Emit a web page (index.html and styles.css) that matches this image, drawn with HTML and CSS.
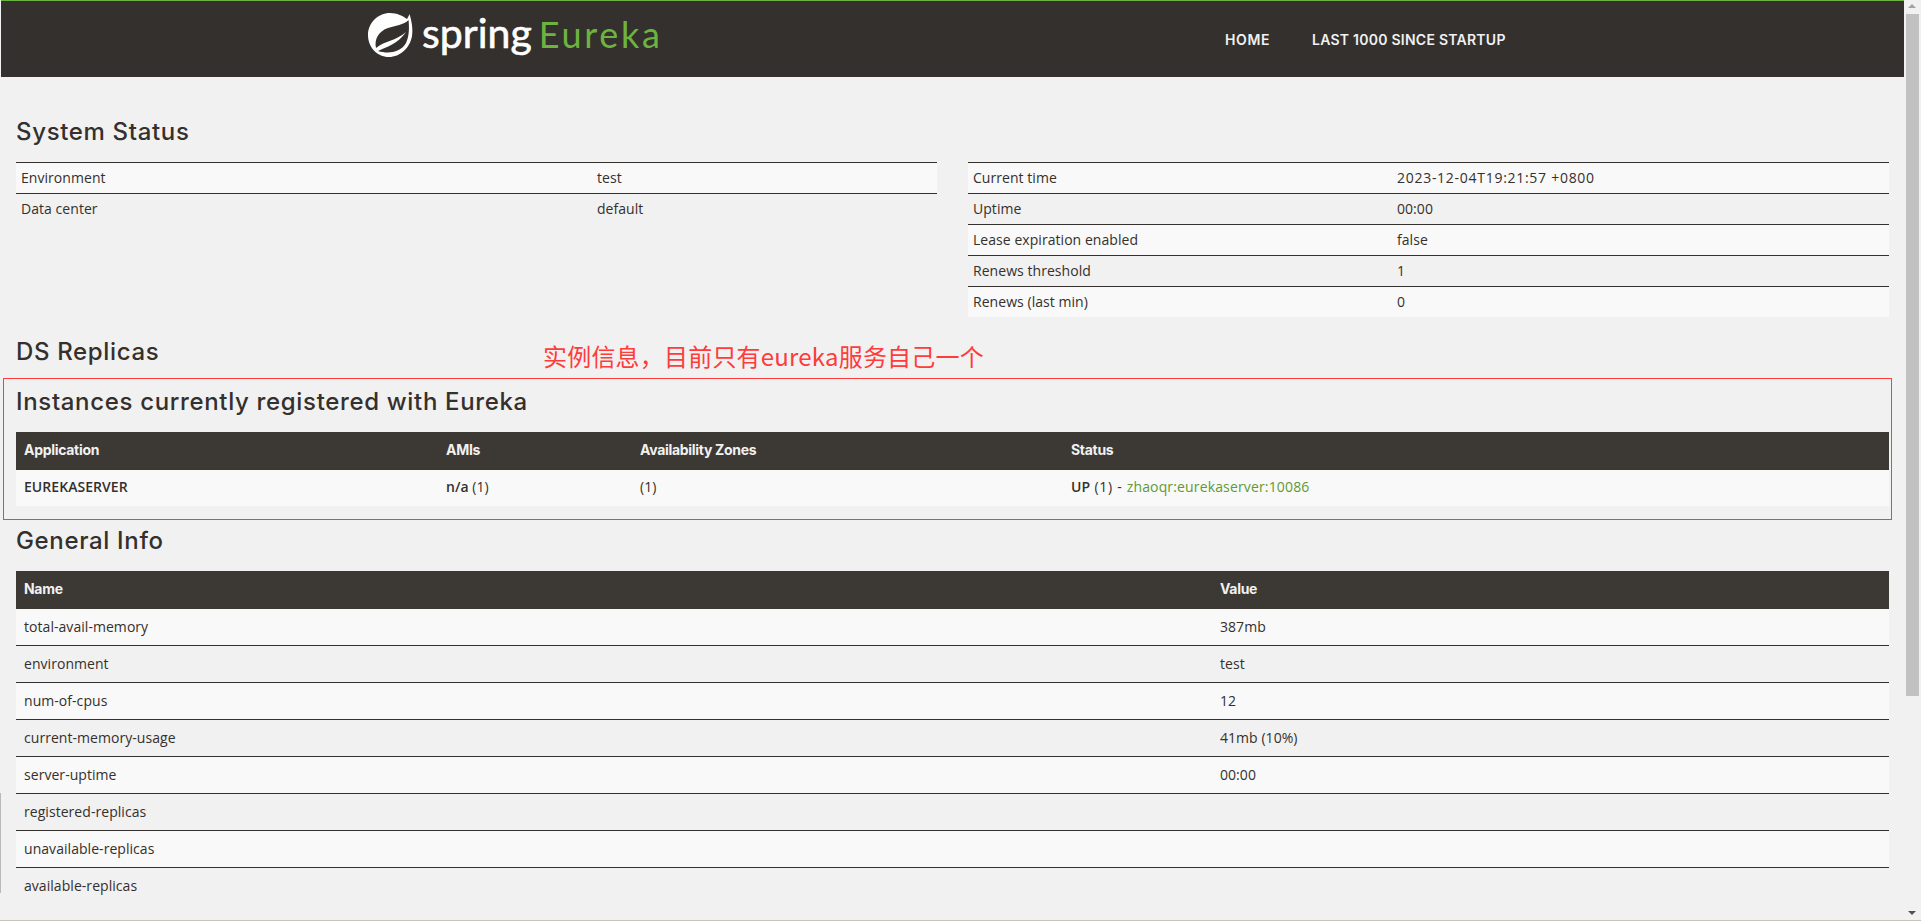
FILE: index.html
```html
<!DOCTYPE html>
<html lang="en">
<head>
<meta charset="utf-8">
<title>Eureka</title>
<link rel="stylesheet" href="styles.css">
</head>
<body>
<div class="page">
  <header class="navbar">
    <div class="brand">
      <svg class="leaf" viewBox="0 0 60 54" aria-hidden="true">
        <path class="leaf-white" d="M47.5 6C50 14 51 22 50 28C48 40 38 49 27 49C15 49 6 39 6 27C6 15 16 5 28 5C35 5 41 8 45 11C46 9 47 8 47.5 6Z"/>
        <path class="leaf-dark" d="M46.5 12C42 17 33 17.5 26 20C17 23 12 31 14 40C22 33 34 33 44 24C36 36 24 39 16 43C26 46 38 45 44 35C47 29 47.5 20 46.5 12Z"/>
      </svg>
      <span class="word-spring">spring</span>
      <span class="word-eureka">Eureka</span>
    </div>
    <nav class="nav">
      <a class="nav-home">HOME</a>
      <a class="nav-last">LAST 1000 SINCE STARTUP</a>
    </nav>
  </header>

  <main class="content">
    <h2 class="h-system">System Status</h2>
    <div class="status-grid">
      <table class="info left-info">
        <tr><td class="k">Environment</td><td>test</td></tr>
        <tr><td class="k">Data center</td><td>default</td></tr>
      </table>
      <table class="info right-info">
        <tr><td class="k">Current time</td><td class="ts">2023-12-04T19:21:57 +0800</td></tr>
        <tr><td class="k">Uptime</td><td>00:00</td></tr>
        <tr><td class="k">Lease expiration enabled</td><td>false</td></tr>
        <tr><td class="k">Renews threshold</td><td>1</td></tr>
        <tr><td class="k">Renews (last min)</td><td>0</td></tr>
      </table>
    </div>

    <h2 class="h-replicas">DS Replicas</h2>
    <h2 class="h-instances">Instances currently registered with Eureka</h2>
    <table class="grid instances">
      <thead>
        <tr><th class="c-app">Application</th><th class="c-ami">AMIs</th><th class="c-zone">Availability Zones</th><th>Status</th></tr>
      </thead>
      <tbody>
        <tr><td><b>EUREKASERVER</b></td><td><b>n/a</b> (1)</td><td>(1)</td><td><b>UP</b><span class="count"> (1) - </span><a class="link">zhaoqr:eurekaserver:10086</a></td></tr>
      </tbody>
    </table>

    <h2 class="h-general">General Info</h2>
    <table class="grid general">
      <thead>
        <tr><th class="c-name">Name</th><th>Value</th></tr>
      </thead>
      <tbody>
        <tr><td>total-avail-memory</td><td>387mb</td></tr>
        <tr><td>environment</td><td>test</td></tr>
        <tr><td>num-of-cpus</td><td>12</td></tr>
        <tr><td>current-memory-usage</td><td>41mb (10%)</td></tr>
        <tr><td>server-uptime</td><td>00:00</td></tr>
        <tr><td>registered-replicas</td><td></td></tr>
        <tr><td>unavailable-replicas</td><td></td></tr>
        <tr><td>available-replicas</td><td></td></tr>
      </tbody>
    </table>
  </main>

  <div class="note">实例信息&#xFF0C;目前只有eureka服务自己一个</div>
  <div class="note-box"></div>
</div>
<div class="scrollbar">
  <div class="arrow-up"></div>
  <div class="thumb"></div>
  <div class="arrow-down"></div>
</div>
<div class="edge-left"></div>
</body>
</html>
```

FILE: styles.css
```css
* { box-sizing: border-box; }
html, body { margin: 0; height: 100%; overflow: hidden; }
body {
  display: flex;
  background: #f1f1f1;
  color: #34302d;
  font-family: "Open Sans", "Liberation Sans", sans-serif;
  font-size: 14px;
  letter-spacing: 0.05px;
  border-bottom: 1px solid #c9c5bd;
  position: relative;
}
.page { width: 1905px; position: relative; padding-left: 1px; overflow: hidden; flex: none; }

.navbar {
  height: 77px;
  width: 1903px;
  background: #34302d;
  border-top: 1px solid #6db33f;
  display: flex;
  position: relative;
}
.brand { display: flex; align-items: flex-start; margin-left: 361px; width: 864px; }
.leaf { width: 60px; height: 54px; margin-top: 7px; flex: none; }
.leaf-white { fill: #fff; }
.leaf-dark { fill: #34302d; }
.word-spring {
  font-family: "Lato", sans-serif;
  font-size: 41px;
  line-height: 50px;
  margin: 7px 0 0 0;
  letter-spacing: 0;
  -webkit-text-stroke: 0.6px #fff;
  color: #fff;
}
.word-eureka {
  font-family: "Lato", sans-serif;
  font-size: 36px;
  line-height: 50px;
  margin: 8px 0 0 7px;
  letter-spacing: 2.7px;
  color: #6db33f;
}
.nav { display: flex; position: absolute; left: 1224px; top: 0; height: 76px; align-items: center; font-family: "Inter", sans-serif; font-weight: 600; font-size: 14px; letter-spacing: 0.25px; color: #f1f1f1; }
.nav-home { margin-right: 42px; letter-spacing: 0.6px; }

.content { width: 1873px; margin-left: 15px; }
h2 { margin: 0; font-family: "Inter", sans-serif; font-weight: 500; font-size: 24px; letter-spacing: 0.66px; line-height: 30px; color: #34302d; }
.h-system { margin-top: 40px; margin-bottom: 15px; }
.h-replicas { margin-top: 20px; }
.h-instances { margin-top: 20px; margin-bottom: 15px; }
.h-general { margin-top: 20px; margin-bottom: 15px; }

table { border-collapse: separate; border-spacing: 0; table-layout: fixed; width: 100%; }
.status-grid { display: grid; grid-template-columns: 921px 921px; column-gap: 31px; align-items: start; height: 155px; }
.info td { height: 31px; padding: 0 5px 2px; border-top: 1px solid #34302d; }
.info tr:nth-child(odd) td { background: #f9f9f9; }
.info .ts { letter-spacing: 0.72px; }
.left-info .k { width: 576px; }
.right-info .k { width: 424px; }

.grid th { height: 38px; padding: 0 8px 3px; background: #3c3834; color: #f1f1f1; text-align: left; font-family: "Inter", sans-serif; font-weight: 700; font-size: 14px; letter-spacing: -0.3px; }
.grid td { height: 37px; padding: 0 8px 2px; border-bottom: 1px solid #34302d; }
.grid tbody tr:last-child td { border-bottom: 0; height: 36px; }
.instances td { padding-bottom: 3px; }
.grid tbody tr:nth-child(odd) td { background: #f9f9f9; }
.grid b { font-weight: 600; }
.count { letter-spacing: 0.7px; }
.c-app { width: 422px; }
.c-ami { width: 194px; }
.c-zone { width: 431px; }
.c-name { width: 1196px; }
.link { color: #5f9a35; letter-spacing: 0.15px; }

.note {
  position: absolute;
  left: 543px;
  top: 340px;
  font-family: "Noto Sans CJK SC", sans-serif;
  font-size: 24px;
  line-height: 32px;
  letter-spacing: 0.2px;
  color: #ff3b3b;
  white-space: nowrap;
}
.note-box {
  position: absolute;
  left: 3px;
  top: 378px;
  width: 1889px;
  height: 142px;
  border: 1px solid #ff3b3b;
}

.scrollbar { width: 16px; position: relative; flex: none; background: #f1f1f1; }
.arrow-up, .arrow-down { position: absolute; left: 3px; width: 0; height: 0; border-left: 4px solid transparent; border-right: 4px solid transparent; }
.arrow-up { top: 4px; border-bottom: 4px solid #a3a3a3; }
.arrow-down { bottom: 5px; border-top: 4px solid #505050; }
.thumb { position: absolute; left: 1px; top: 14px; width: 13px; height: 682px; background: #c1c1c1; }
.edge-left { position: absolute; left: 0; top: 793px; width: 1px; height: 100px; background: #b9b9b9; }
```
